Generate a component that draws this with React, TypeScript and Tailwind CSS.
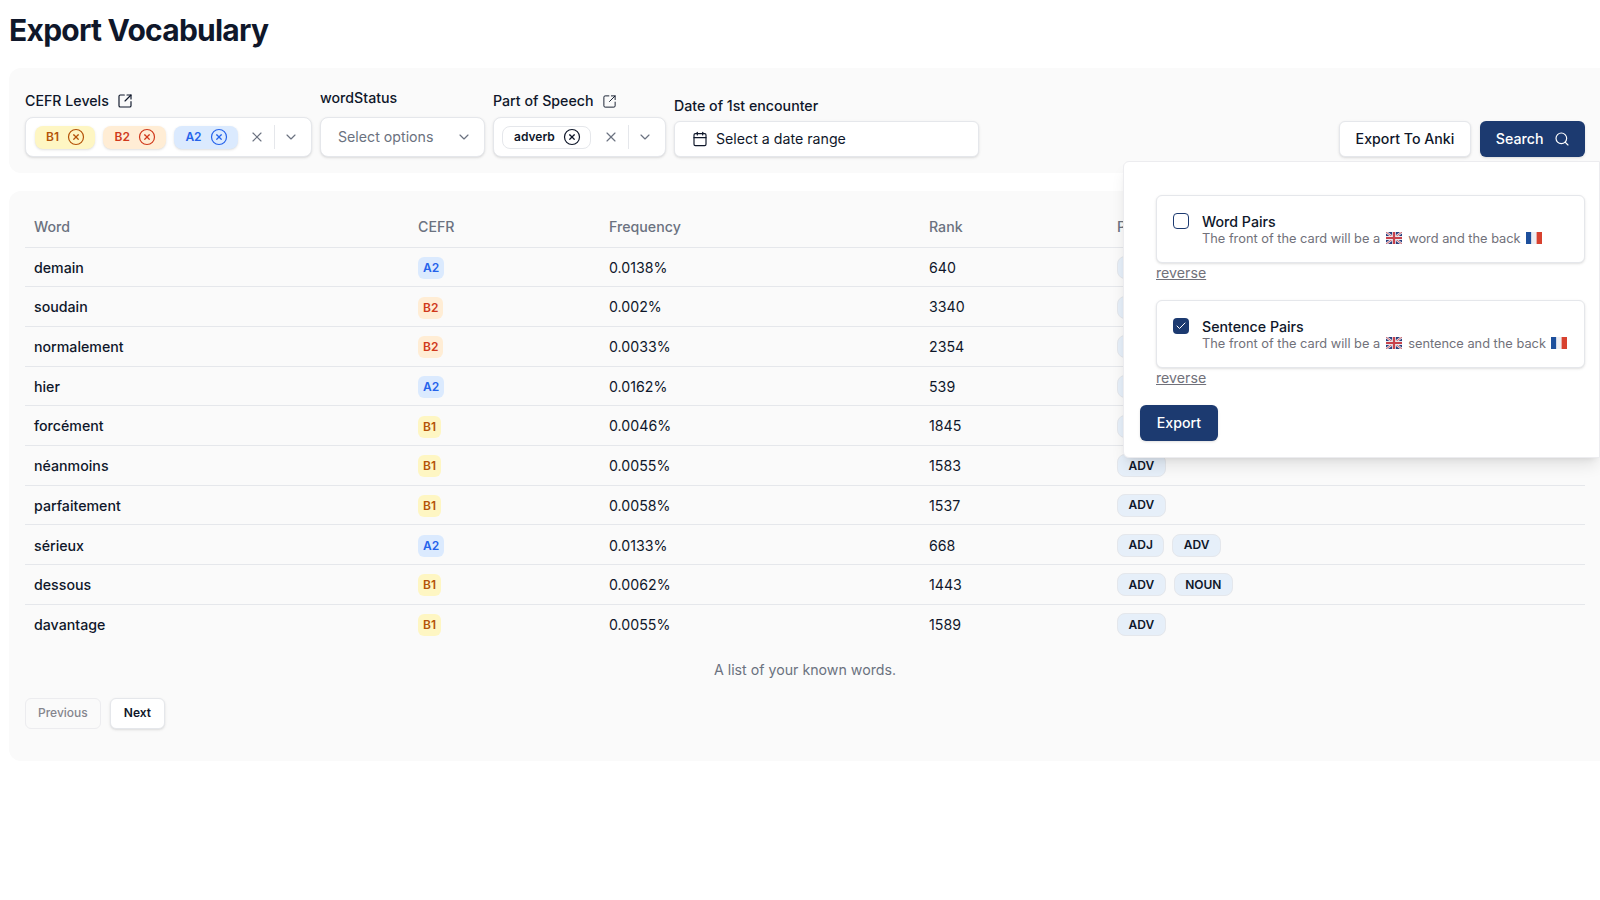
import React from "react";
import { Calendar, Check, ChevronDown, CircleX, Search, SquareArrowOutUpRight, X } from "lucide-react";

type Level = "A2" | "B1" | "B2";

interface Row {
    word: string;
    level: Level;
    frequency: string;
    rank: number;
    pos: string[];
}

const rows: Row[] = [
    { word: "demain", level: "A2", frequency: "0.0138%", rank: 640, pos: ["ADV"] },
    { word: "soudain", level: "B2", frequency: "0.002%", rank: 3340, pos: ["ADV"] },
    { word: "normalement", level: "B2", frequency: "0.0033%", rank: 2354, pos: ["ADV"] },
    { word: "hier", level: "A2", frequency: "0.0162%", rank: 539, pos: ["ADV"] },
    { word: "forcément", level: "B1", frequency: "0.0046%", rank: 1845, pos: ["ADV"] },
    { word: "néanmoins", level: "B1", frequency: "0.0055%", rank: 1583, pos: ["ADV"] },
    { word: "parfaitement", level: "B1", frequency: "0.0058%", rank: 1537, pos: ["ADV"] },
    { word: "sérieux", level: "A2", frequency: "0.0133%", rank: 668, pos: ["ADJ", "ADV"] },
    { word: "dessous", level: "B1", frequency: "0.0062%", rank: 1443, pos: ["ADV", "NOUN"] },
    { word: "davantage", level: "B1", frequency: "0.0055%", rank: 1589, pos: ["ADV"] },
];

const levelStyles: Record<Level, string> = {
    A2: "bg-[#dbeafe] text-[#2563eb]",
    B1: "bg-[#fef6c3] text-[#b45309]",
    B2: "bg-[#ffedd5] text-[#d0391c]",
};

const UkFlag = () => (
    <svg viewBox="0 0 16 12" className="inline-block w-4 h-3 ml-[6px] mr-[6px] align-[-1px]">
        <rect width="16" height="12" rx="1.5" fill="#2a3f7e" />
        <path d="M0 0 16 12M16 0 0 12" stroke="#e8e8ee" strokeWidth="2.4" />
        <path d="M0 0 16 12M16 0 0 12" stroke="#c8414b" strokeWidth="0.8" />
        <path d="M8 0V12M0 6H16" stroke="#e8e8ee" strokeWidth="3.8" />
        <path d="M8 0V12M0 6H16" stroke="#c8414b" strokeWidth="2.2" />
    </svg>
);

const FrFlag = () => (
    <svg viewBox="0 0 16 12" className="inline-block w-4 h-3 ml-[5px] align-[-1px]">
        <rect width="5.4" height="12" fill="#1d4f9c" />
        <rect x="5.4" width="5.2" height="12" fill="#eeeef2" />
        <rect x="10.6" width="5.4" height="12" fill="#d8412f" />
    </svg>
);

const Chip = ({ level }: { level: Level }) => (
    <span className={`flex items-center gap-2 h-[23px] pl-[11px] pr-[10.5px] rounded-lg text-xs font-semibold shadow-sm ${levelStyles[level]}`}>
        {level}
        <CircleX className="w-[18px] h-[18px]" strokeWidth={1.6} />
    </span>
);

const SelectControls = () => (
    <div className="flex items-center ml-auto text-[#6b7280]">
        <X className="w-4 h-4" strokeWidth={1.75} />
        <span className="w-px h-6 bg-[#e5e7eb] ml-[9px] mr-2" />
        <ChevronDown className="w-4 h-4" strokeWidth={1.75} />
    </div>
);

const ExportOption = ({
    title,
    unit,
    checked,
}: {
    title: string;
    unit: string;
    checked: boolean;
}) => (
    <div className="ml-4">
        <div className="flex h-[68px] pl-4 pt-[17px] gap-[13px] bg-white border border-[#e5e7eb] rounded-md shadow-sm">
            {checked ? (
                <span className="flex items-center justify-center w-4 h-4 rounded-[4px] bg-[#1c3a70] text-white">
                    <Check className="w-3 h-3" strokeWidth={2} />
                </span>
            ) : (
                <span className="w-4 h-4 rounded-[4px] border border-[#1c3a70] bg-white" />
            )}
            <div className="flex flex-col">
                <span className="text-[14.2px] font-medium leading-[18px] text-[#0f172a]">{title}</span>
                <span className="text-[12.8px] leading-4 text-[#71717a]">
                    The front of the card will be a<UkFlag />{unit} and the back<FrFlag />
                </span>
            </div>
        </div>
        <a className="block h-5 text-[14.2px] leading-5 text-[#71717a] underline">reverse</a>
    </div>
);

const App: React.FC = () => {
    return (
        <div className="relative h-[900px] overflow-hidden bg-white pl-[9px] pt-3 font-['Inter',sans-serif] text-[#0f172a]">
            <h1 className="text-3xl font-bold tracking-tight leading-9 mb-5 text-[#0f172a]">Export Vocabulary</h1>

            {/* Filters */}
            <div className="flex items-end h-[105px] pb-4 pl-4 pr-[15px] gap-2 bg-[#fafafa] rounded-l-xl">
                <div className="w-[287px]">
                    <label className="flex items-center gap-2 h-5 mb-1.5 text-[14.2px] leading-5 font-medium">
                        CEFR Levels
                        <SquareArrowOutUpRight className="w-4 h-4" strokeWidth={1.75} />
                    </label>
                    <div className="flex items-center h-10 pl-[9px] pr-3 gap-2 bg-white border border-[#e5e7eb] rounded-lg shadow-sm">
                        <Chip level="B1" />
                        <Chip level="B2" />
                        <Chip level="A2" />
                        <SelectControls />
                    </div>
                </div>

                <div className="w-[165px]">
                    <label className="block h-5 mb-[9px] text-[14.2px] leading-5 font-medium">wordStatus</label>
                    <div className="flex items-center h-10 pl-[17px] pr-3 bg-white border border-[#e5e7eb] rounded-lg shadow-sm text-[14.2px] text-[#6b7280]">
                        Select options
                        <ChevronDown className="w-4 h-4 ml-auto" strokeWidth={1.75} />
                    </div>
                </div>

                <div className="w-[173px]">
                    <label className="flex items-center gap-2 h-5 mb-1.5 text-[14.2px] leading-5 font-medium">
                        Part of Speech
                        <SquareArrowOutUpRight className="w-[15px] h-[15px]" strokeWidth={1.5} />
                    </label>
                    <div className="flex items-center h-10 pl-2 pr-3 bg-white border border-[#e5e7eb] rounded-lg shadow-sm">
                        <span className="flex items-center gap-2 h-[23px] pl-[11px] pr-[9px] bg-white border border-[#e5e7eb] rounded-lg text-xs font-semibold">
                            adverb
                            <CircleX className="w-[18px] h-[18px]" strokeWidth={1.6} />
                        </span>
                        <SelectControls />
                    </div>
                </div>

                <div className="w-[305px]">
                    <label className="block h-5 mb-[5px] text-[14.2px] leading-5 font-medium">Date of 1st encounter</label>
                    <div className="flex items-center gap-2 h-9 px-[17px] bg-white border border-[#e5e7eb] rounded-md shadow-sm text-[14.2px]">
                        <Calendar className="w-4 h-4" strokeWidth={1.75} />
                        Select a date range
                    </div>
                </div>

                <div className="relative flex items-center gap-[9px] ml-auto">
                    <button className="h-9 px-4 bg-white border border-[#e5e7eb] rounded-md shadow-sm text-[14.2px] font-medium">
                        Export To Anki
                    </button>
                    <button className="flex items-center gap-2.5 h-9 px-[15.5px] bg-[#1c3a70] rounded-md shadow-sm text-[14.2px] font-medium text-white">
                        Search
                        <Search className="w-4 h-4" strokeWidth={1.75} />
                    </button>

                    {/* Export popover */}
                    <div className="absolute z-10 top-[40px] right-[-15px] w-[477px] h-[297px] pt-[33px] pl-4 pr-[14px] bg-white border border-[#ececef] rounded-l-md shadow-lg">
                        <ExportOption title="Word Pairs" unit="word" checked={false} />
                        <div className="h-[17px]" />
                        <ExportOption title="Sentence Pairs" unit="sentence" checked />
                        <button className="block h-9 w-[78px] mt-[17px] bg-[#1c3a70] rounded-md shadow-sm text-[14.2px] font-medium text-white">
                            Export
                        </button>
                    </div>
                </div>
            </div>

            {/* Table */}
            <div className="mt-[18px] h-[570px] pl-4 pr-[15px] pt-4 bg-[#fafafa] rounded-l-xl">
                <table className="w-full table-fixed caption-bottom text-[14.2px]">
                    <caption className="mt-4 h-5 leading-5 text-[#6b7280]">A list of your known words.</caption>
                    <colgroup>
                        <col className="w-[385px]" />
                        <col className="w-[191px]" />
                        <col className="w-[320px]" />
                        <col className="w-[188px]" />
                        <col />
                    </colgroup>
                    <thead>
                        <tr className="border-b border-[#e5e7eb]">
                            <th className="h-10 pl-[9px] pr-2 text-left font-medium text-[#6b7280]">Word</th>
                            <th className="h-10 px-2 text-left font-medium text-[#6b7280]">CEFR</th>
                            <th className="h-10 px-2 text-left font-medium text-[#6b7280]">Frequency</th>
                            <th className="h-10 px-2 text-left font-medium text-[#6b7280]">Rank</th>
                            <th className="h-10 px-2 text-left font-medium text-[#6b7280]">POS</th>
                        </tr>
                    </thead>
                    <tbody>
                        {rows.map((row) => (
                            <tr key={row.word} className="border-b border-[#e5e7eb] last:border-0">
                                <td className="h-[39.7px] pl-[9px] pr-2 pt-px font-medium">{row.word}</td>
                                <td className="h-[39.7px] px-2 pt-px">
                                    <span className={`inline-flex items-center h-[22px] px-[5px] rounded-md text-xs font-semibold ${levelStyles[row.level]}`}>
                                        {row.level}
                                    </span>
                                </td>
                                <td className="h-[39.7px] px-2 pt-px">{row.frequency}</td>
                                <td className="h-[39.7px] px-2 pt-px">{row.rank}</td>
                                <td className="h-[39.7px] px-2 pt-px">
                                    <div className="flex gap-2">
                                        {row.pos.map((p) => (
                                            <span
                                                key={p}
                                                className="inline-flex items-center h-[23px] px-[10.5px] bg-[#e6eff9] border border-[#e4e7ec] rounded-lg text-xs font-semibold"
                                            >
                                                {p}
                                            </span>
                                        ))}
                                    </div>
                                </td>
                            </tr>
                        ))}
                    </tbody>
                </table>

                <div className="flex gap-[9px] mt-[18px]">
                    <button className="h-[31px] px-[12px] border border-[#ececef] rounded-md text-xs font-medium text-[#85858d]">
                        Previous
                    </button>
                    <button className="h-[31px] px-[13px] bg-white border border-[#e5e7eb] rounded-md shadow-sm text-xs font-semibold">
                        Next
                    </button>
                </div>
            </div>
        </div>
    );
};

export default App;
